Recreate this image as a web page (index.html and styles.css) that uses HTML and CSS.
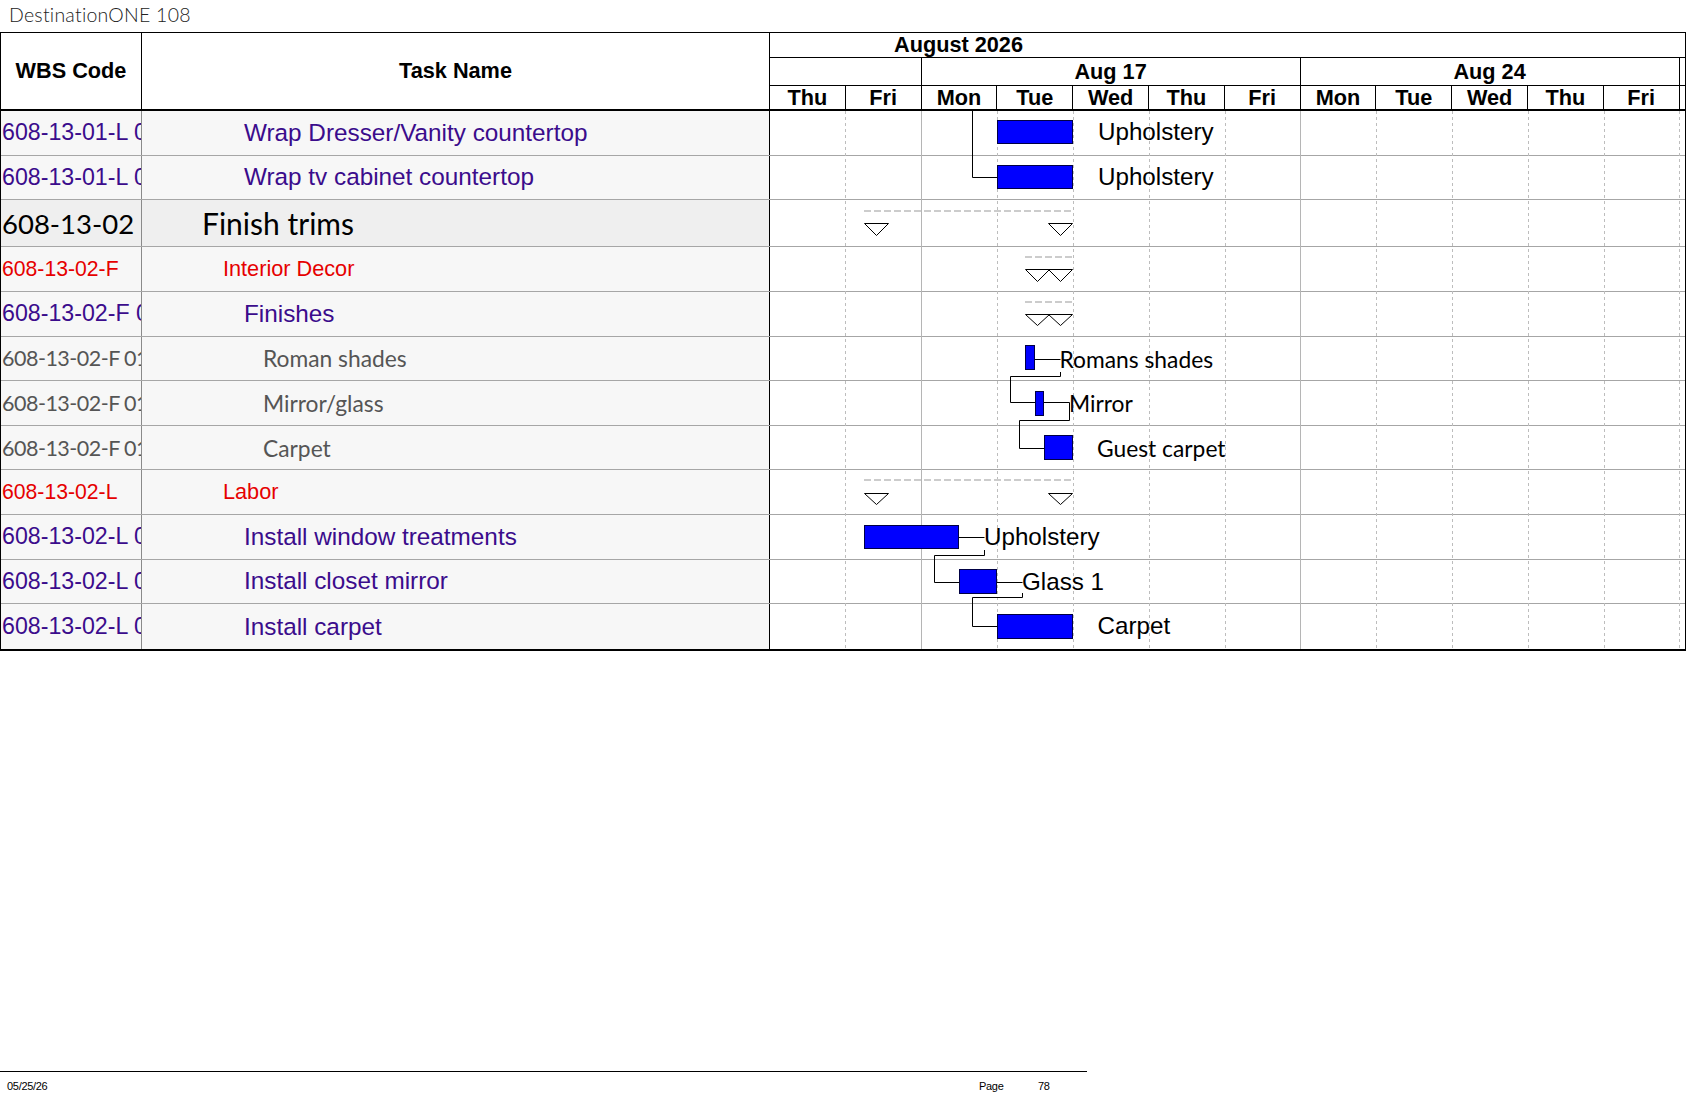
FILE: index.html
```html
<!DOCTYPE html>
<html lang="en">
<head>
<meta charset="utf-8">
<title>DestinationONE 108</title>
<link rel="stylesheet" href="styles.css">
</head>
<body>
<div class="page">
  <div class="title">DestinationONE 108</div>
  <div class="table">
    <div class="thead">
      <div class="th">WBS Code</div>
      <div class="th">Task Name</div>
      <div class="th-gantt">
        <div class="tl-month">August 2026</div>
        <div class="tl-weeks">
          <div class="wk wk-a"></div>
          <div class="wk wk-b">Aug 17</div>
          <div class="wk wk-c">Aug 24</div>
          <div class="wk wk-d"></div>
        </div>
        <div class="tl-days">
          <div class="day">Thu</div>
          <div class="day">Fri</div>
          <div class="day">Mon</div>
          <div class="day">Tue</div>
          <div class="day">Wed</div>
          <div class="day">Thu</div>
          <div class="day">Fri</div>
          <div class="day">Mon</div>
          <div class="day">Tue</div>
          <div class="day">Wed</div>
          <div class="day">Thu</div>
          <div class="day">Fri</div>
          <div class="day day-end"></div>
        </div>
      </div>
    </div>
    <div class="tbody">
      <div class="row">
        <div class="c-wbs t-purple code">608-13-01-L 01</div>
        <div class="c-task t-purple ind3">Wrap Dresser/Vanity countertop</div>
        <div class="c-gantt"></div>
      </div>
      <div class="row">
        <div class="c-wbs t-purple code">608-13-01-L 02</div>
        <div class="c-task t-purple ind3">Wrap tv cabinet countertop</div>
        <div class="c-gantt"></div>
      </div>
      <div class="row row-sum">
        <div class="c-wbs t-sum-code">608-13-02</div>
        <div class="c-task t-sum ind1">Finish trims</div>
        <div class="c-gantt"></div>
      </div>
      <div class="row">
        <div class="c-wbs t-red code">608-13-02-F</div>
        <div class="c-task t-red ind2">Interior Decor</div>
        <div class="c-gantt"></div>
      </div>
      <div class="row">
        <div class="c-wbs t-purple code">608-13-02-F 01</div>
        <div class="c-task t-purple ind3">Finishes</div>
        <div class="c-gantt"></div>
      </div>
      <div class="row">
        <div class="c-wbs t-gray t-gray-code">608-13-02-F 01 01</div>
        <div class="c-task t-gray ind4">Roman shades</div>
        <div class="c-gantt"></div>
      </div>
      <div class="row">
        <div class="c-wbs t-gray t-gray-code">608-13-02-F 01 02</div>
        <div class="c-task t-gray ind4">Mirror/glass</div>
        <div class="c-gantt"></div>
      </div>
      <div class="row">
        <div class="c-wbs t-gray t-gray-code">608-13-02-F 01 03</div>
        <div class="c-task t-gray ind4">Carpet</div>
        <div class="c-gantt"></div>
      </div>
      <div class="row">
        <div class="c-wbs t-red code">608-13-02-L</div>
        <div class="c-task t-red ind2">Labor</div>
        <div class="c-gantt"></div>
      </div>
      <div class="row">
        <div class="c-wbs t-purple code">608-13-02-L 01</div>
        <div class="c-task t-purple ind3">Install window treatments</div>
        <div class="c-gantt"></div>
      </div>
      <div class="row">
        <div class="c-wbs t-purple code">608-13-02-L 02</div>
        <div class="c-task t-purple ind3">Install closet mirror</div>
        <div class="c-gantt"></div>
      </div>
      <div class="row row-last">
        <div class="c-wbs t-purple code">608-13-02-L 03</div>
        <div class="c-task t-purple ind3">Install carpet</div>
        <div class="c-gantt"></div>
      </div>

      <svg class="chart" width="915" height="538" viewBox="770 111 915 538" xmlns="http://www.w3.org/2000/svg">
        <g class="grid-dash">
          <line x1="845.5" y1="111" x2="845.5" y2="649"/>
          <line x1="997.5" y1="111" x2="997.5" y2="649"/>
          <line x1="1073.5" y1="111" x2="1073.5" y2="649"/>
          <line x1="1149.5" y1="111" x2="1149.5" y2="649"/>
          <line x1="1225.5" y1="111" x2="1225.5" y2="649"/>
          <line x1="1376.5" y1="111" x2="1376.5" y2="649"/>
          <line x1="1452.5" y1="111" x2="1452.5" y2="649"/>
          <line x1="1528.5" y1="111" x2="1528.5" y2="649"/>
          <line x1="1604.5" y1="111" x2="1604.5" y2="649"/>
          <line x1="1679.5" y1="111" x2="1679.5" y2="649"/>
        </g>
        <g class="grid-solid">
          <line x1="921.5" y1="111" x2="921.5" y2="649"/>
          <line x1="1300.5" y1="111" x2="1300.5" y2="649"/>
        </g>

        <g class="sum-line">
          <line x1="864" y1="211" x2="1072" y2="211"/>
          <line x1="1025" y1="257" x2="1072" y2="257"/>
          <line x1="1025" y1="302" x2="1072" y2="302"/>
          <line x1="864" y1="480" x2="1072" y2="480"/>
        </g>
        <g class="tri">
          <polygon points="864.5,223.5 888.5,223.5 876.5,235.5"/>
          <polygon points="1048.5,223.5 1072.5,223.5 1060.5,235.5"/>
          <polygon points="1025.5,269.5 1049.5,269.5 1037.5,281.5"/>
          <polygon points="1048.5,269.5 1072.5,269.5 1060.5,281.5"/>
          <polygon points="1025.5,314.5 1049.5,314.5 1037.5,325.5"/>
          <polygon points="1048.5,314.5 1072.5,314.5 1060.5,325.5"/>
          <polygon points="864.5,493.5 888.5,493.5 876.5,504.5"/>
          <polygon points="1048.5,493.5 1072.5,493.5 1060.5,504.5"/>
        </g>

        <g class="link">
          <polyline points="972.5,111 972.5,177.5 997,177.5"/>
          <polyline points="1035,359.5 1060.5,359.5"/>
          <polyline points="1060.5,372 1060.5,376.5 1010.5,376.5 1010.5,402.5 1035,402.5"/>
          <polyline points="1044,402.5 1069.5,402.5 1069.5,420.5 1019.5,420.5 1019.5,448.5 1044,448.5"/>
          <polyline points="959,537.5 984.5,537.5"/>
          <polyline points="984.5,550 984.5,555.5 934.5,555.5 934.5,582.5 959,582.5"/>
          <polyline points="997,582.5 1022.5,582.5"/>
          <polyline points="1022.5,593 1022.5,597.5 972.5,597.5 972.5,626.5 997,626.5"/>
        </g>

        <g class="bar">
          <rect x="997.5" y="120.5" width="75" height="23"/>
          <rect x="997.5" y="165.5" width="75" height="23"/>
          <rect x="1025.5" y="345.5" width="9" height="24"/>
          <rect x="1035.5" y="391.5" width="8" height="24"/>
          <rect x="1044.5" y="435.5" width="28" height="24"/>
          <rect x="864.5" y="525.5" width="94" height="23"/>
          <rect x="959.5" y="569.5" width="37" height="24"/>
          <rect x="997.5" y="614.5" width="75" height="24"/>
        </g>

        <text class="lbl-a" x="1098" y="139.5">Upholstery</text>
        <text class="lbl-a" x="1098" y="184.5">Upholstery</text>
        <text class="lbl-c" x="1059.5" y="367.5">Romans shades</text>
        <text class="lbl-c" x="1069" y="411.5">Mirror</text>
        <text class="lbl-c" x="1097" y="456.5">Guest carpet</text>
        <text class="lbl-a" x="984" y="545">Upholstery</text>
        <text class="lbl-a" x="1022" y="589.5">Glass 1</text>
        <text class="lbl-a" x="1097.5" y="633.5">Carpet</text>
      </svg>
    </div>
  </div>
  <div class="footer">
    <div class="f-date">05/25/26</div>
    <div class="f-page">Page</div>
    <div class="f-num">78</div>
  </div>
</div>
</body>
</html>
```

FILE: styles.css
```css
* {
  box-sizing: border-box;
}

html,
body {
  margin: 0;
  padding: 0;
  background: #ffffff;
}

.page {
  width: 1687px;
  height: 1097px;
  display: flex;
  flex-direction: column;
  overflow: hidden;
}

.title {
  height: 32px;
  line-height: 30px;
  padding-left: 9px;
  font-family: Lato, "Noto Sans", sans-serif;
  font-weight: 300;
  font-size: 19.5px;
  letter-spacing: 0.25px;
  color: #222222;
}

.table {
  width: 1686px;
  border: 1px solid #000000;
  border-bottom: 2px solid #000000;
}

/* ---------- header ---------- */
.thead {
  display: grid;
  grid-template-columns: 141px 628px 915px;
  border-bottom: 2px solid #000000;
  font-family: "Liberation Sans", Arial, sans-serif;
  font-weight: bold;
  font-size: 21.7px;
  color: #000000;
}

.th {
  border-right: 1px solid #000000;
  display: flex;
  align-items: center;
  justify-content: center;
  background: #ffffff;
}

.th-gantt {
  display: flex;
  flex-direction: column;
}

.tl-month {
  height: 25px;
  line-height: 24px;
  border-bottom: 1px solid #000000;
  padding-left: 124px;
  white-space: nowrap;
}

.tl-weeks,
.tl-days {
  display: grid;
  grid-template-columns: repeat(12, 75.8px) 1fr;
}

.tl-weeks {
  height: 28px;
  border-bottom: 1px solid #000000;
}

.wk {
  border-right: 1px solid #000000;
  text-align: center;
  line-height: 27px;
  white-space: nowrap;
}

.wk-a { grid-column: 1 / 3; }
.wk-b { grid-column: 3 / 8; }
.wk-c { grid-column: 8 / 13; }
.wk-d { grid-column: 13 / 14; border-right: none; }

.tl-days {
  height: 23px;
}

.day {
  border-right: 1px solid #000000;
  text-align: center;
  line-height: 24px;
  white-space: nowrap;
}

.day-end {
  border-right: none;
}

/* ---------- body ---------- */
.tbody {
  position: relative;
}

.row {
  display: grid;
  grid-template-columns: 141px 628px 915px;
  height: 44.64px;
  border-bottom: 1px solid #a6a6a6;
}

.row-sum {
  height: 47px;
}

.row-last {
  border-bottom: none;
}

.c-wbs {
  border-right: 1px solid #8a8a8a;
  background: #f7f7f7;
  display: flex;
  align-items: center;
  padding-left: 1px;
  white-space: nowrap;
  overflow: hidden;
}

.c-task {
  border-right: 1px solid #000000;
  background: #f7f7f7;
  display: flex;
  align-items: center;
  white-space: nowrap;
  overflow: hidden;
}

.row-sum .c-wbs,
.row-sum .c-task {
  background: #efefef;
}

.c-gantt {
  background: #ffffff;
}

.ind1 { padding-left: 60px; }
.ind2 { padding-left: 81px; }
.ind3 { padding-left: 102px; }
.ind4 { padding-left: 121px; }

.t-purple {
  font-family: "Liberation Sans", Arial, sans-serif;
  font-size: 24.3px;
  color: #3b0c8c;
}

.t-red {
  font-family: "Liberation Sans", Arial, sans-serif;
  font-size: 21.7px;
  color: #e60000;
}

.t-purple.code {
  font-size: 23.2px;
}

.t-red.code {
  font-size: 21.2px;
}

.t-gray {
  font-family: Lato, "Noto Sans", sans-serif;
  font-size: 22.8px;
  color: #555555;
}

.t-gray-code {
  font-size: 21.5px;
  letter-spacing: -0.5px;
  word-spacing: -0.5px;
}

.t-sum {
  font-family: Lato, "Noto Sans", sans-serif;
  font-size: 30px;
  color: #000000;
}

.t-sum-code {
  font-family: Lato, "Noto Sans", sans-serif;
  font-size: 27.5px;
  color: #000000;
}

/* ---------- gantt chart canvas ---------- */
.chart {
  position: absolute;
  left: 769px;
  top: 0;
  display: block;
}

.grid-dash line {
  stroke: #bdbdbd;
  stroke-width: 1;
  stroke-dasharray: 3 3;
}

.grid-solid line {
  stroke: #b5b5b5;
  stroke-width: 1;
}

.sum-line line {
  stroke: #cccccc;
  stroke-width: 2;
  stroke-dasharray: 7 3;
}

.tri polygon {
  fill: #ffffff;
  stroke: #000000;
  stroke-width: 1;
}

.link polyline {
  fill: none;
  stroke: #000000;
  stroke-width: 1;
}

.bar rect {
  fill: #0000ff;
  stroke: #000044;
  stroke-width: 1;
}

.lbl-a {
  font-family: "Liberation Sans", Arial, sans-serif;
  font-size: 24.2px;
  fill: #000000;
}

.lbl-c {
  font-family: Lato, "Noto Sans", sans-serif;
  font-size: 22.8px;
  fill: #000000;
}

/* ---------- footer ---------- */
.footer {
  margin-top: auto;
  width: 1087px;
  height: 26px;
  border-top: 1px solid #000000;
  display: grid;
  grid-template-columns: 979px 59px 1fr;
  padding-top: 7px;
  font-family: "Liberation Sans Narrow", "Liberation Sans", Arial, sans-serif;
  font-stretch: condensed;
  font-size: 11px;
  letter-spacing: -0.3px;
  line-height: 14px;
  color: #000000;
}

.f-date {
  padding-left: 7px;
}
```
